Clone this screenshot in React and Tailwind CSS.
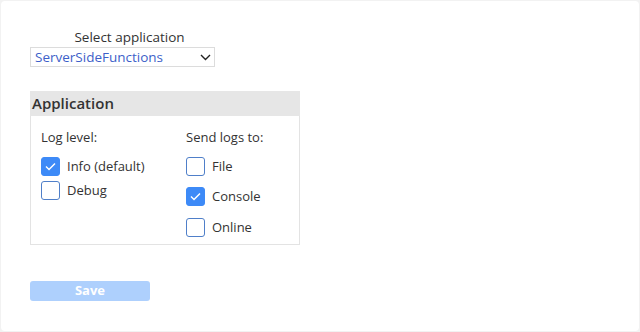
import { useState } from 'react'

function Check({ checked, onChange, label }) {
  return (
    <label className="flex items-center gap-[7px] cursor-pointer select-none">
      <span
        onClick={onChange}
        className={
          checked
            ? 'flex h-[19px] w-[19px] items-center justify-center rounded-[3px] border border-[#3d8af7] bg-[#3d8af7]'
            : 'flex h-[19px] w-[19px] items-center justify-center rounded-[3px] border border-[#4f7fc9] bg-white'
        }
      >
        {checked && (
          <svg width="11" height="9" viewBox="0 0 11 9" fill="none">
            <path d="M1 4.6 L4 7.6 L10 1.4" stroke="white" strokeWidth="1.4" />
          </svg>
        )}
      </span>
      <span className="text-[13px] text-[#333]">{label}</span>
    </label>
  )
}

export default function App() {
  const [level, setLevel] = useState('info')
  const [targets, setTargets] = useState({ file: false, console: true, online: false })

  const toggle = k => setTargets(t => ({ ...t, [k]: !t[k] }))

  return (
    <div className="h-[332px] w-[640px] bg-[#f2f2f2] p-[1px]" style={{ fontFamily: '"Open Sans", sans-serif' }}>
      <div className="h-full rounded-[4px] bg-white pl-[29px] pt-[27px]">
        {/* app picker */}
        <div className="flex w-[185px] flex-col items-center">
          <span className="pl-[14px] text-[13.5px] leading-[18px] text-[#333]">Select application</span>
          <div className="mt-[1px] flex h-[20px] w-full items-center justify-between border border-[#dcdcdc] pl-[4px] pr-[3px]">
            <span className="text-[13.5px] text-[#3d5fc9]">ServerSideFunctions</span>
            <svg width="11" height="7" viewBox="0 0 11 7" fill="none">
              <path d="M1 1 L5.5 5.5 L10 1" stroke="#222" strokeWidth="1.4" />
            </svg>
          </div>
        </div>

        {/* settings panel */}
        <div className="mt-[24px] w-[270px]">
          <div className="flex h-[25px] items-center bg-[#e6e6e6] pl-[2px] text-[15px] font-semibold text-[#333]">
            Application
          </div>
          <div className="flex h-[129px] border border-t-0 border-[#e3e3e3] pl-[10px] pt-[12px]">
            <div className="flex w-[145px] flex-col">
              <span className="mb-[9px] text-[13px] text-[#333]">Log level:</span>
              <div className="flex flex-col gap-[5px]">
                <Check checked={level === 'info'} onChange={() => setLevel('info')} label="Info (default)" />
                <Check checked={level === 'debug'} onChange={() => setLevel('debug')} label="Debug" />
              </div>
            </div>
            <div className="flex flex-col">
              <span className="mb-[9px] text-[13px] text-[#333]">Send logs to:</span>
              <div className="flex flex-col gap-[11px]">
                <Check checked={targets.file} onChange={() => toggle('file')} label="File" />
                <Check checked={targets.console} onChange={() => toggle('console')} label="Console" />
                <Check checked={targets.online} onChange={() => toggle('online')} label="Online" />
              </div>
            </div>
          </div>
        </div>

        <button
          disabled
          className="mt-[36px] flex h-[20px] w-[120px] items-center justify-center rounded-[3px] bg-[#aed0fd] text-[13px] font-bold text-white"
        >
          Save
        </button>
      </div>
    </div>
  )
}
